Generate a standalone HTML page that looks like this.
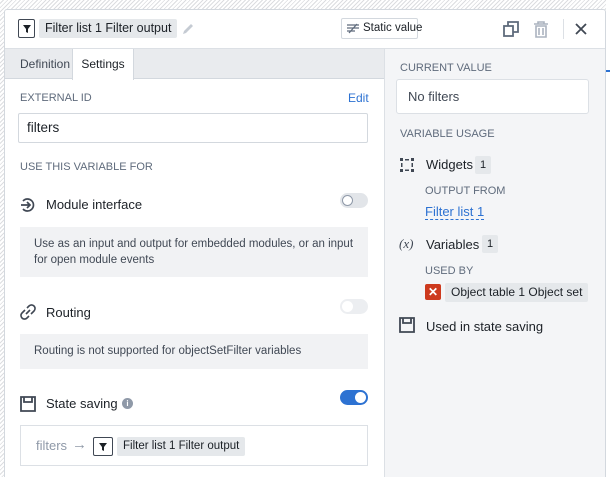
<!DOCTYPE html>
<html><head><style>
*{box-sizing:border-box;margin:0;padding:0;white-space:nowrap}
html{width:610px;height:477px;overflow:hidden}
body{width:610px;height:477px;overflow:hidden;font-family:"Liberation Sans",sans-serif;color:#1c2127;position:relative;background:repeating-linear-gradient(135deg,#fff 0 2px,#dcdde0 2px 3px)}
.a{position:absolute}
.dlg{left:4px;top:9px;width:602px;height:468px;background:#fff;border:1px solid #d3d8de;border-bottom:none;border-radius:3px 3px 0 0}
.lbl{font-size:11px;color:#5f6b7c}
.gb{background:#f1f2f4;font-size:11.5px;color:#404854;line-height:16px;padding:0 0 0 14px}
.tg{width:28px;height:15px;border-radius:8px;background:#e2e5e9}
.tg i{position:absolute;top:2px;width:11px;height:11px;border-radius:50%;background:#fff}
.chip{background:#e5e8eb;border-radius:2px;font-size:12px;padding:0 6px;line-height:19px}
.cnt{background:#e5e8eb;border-radius:2px;font-size:11px;padding:0 5px;line-height:18px}
</style></head><body>
<div class="a" style="left:606px;top:0;width:4px;height:477px;background:#fff"></div>
<div class="a" style="left:606px;top:70px;width:4px;height:2px;background:#2d72d2"></div>
<div class="a dlg"></div>
<!-- header -->
<div class="a" style="left:18px;top:19px;width:17px;height:19px;border:1.5px solid #404854;border-radius:2px"></div>
<svg class="a" style="left:22px;top:24px" width="10" height="10" viewBox="0 0 10 10"><path d="M1 1h8L6 5v4L4 8V5z" fill="#1c2127"/></svg>
<div class="a chip" style="left:39px;top:19px;font-size:12.5px">Filter list 1 Filter output</div>
<svg class="a" style="left:181px;top:22px" width="14" height="14" viewBox="0 0 14 14"><path d="M2 12l1-3 7-7 2 2-7 7z" fill="#c5cbd3"/></svg>
<div class="a" style="left:341px;top:18px;width:77px;height:21px;border:1px solid #d3d8de;border-radius:2px;font-size:11.5px;line-height:19px;padding-left:21px">Static value</div>
<svg class="a" style="left:346px;top:23px" width="14" height="11" viewBox="0 0 14 11"><path d="M1 2h12M1 5h12M1 8h8M3 10L11 1" stroke="#5f6b7c" stroke-width="1.3" fill="none"/></svg>
<svg class="a" style="left:502px;top:20px" width="18" height="18" viewBox="0 0 18 18"><rect x="2" y="6" width="9" height="10" fill="none" stroke="#5f6b7c" stroke-width="1.8"/><path d="M6 6V2h10v10h-5" fill="none" stroke="#5f6b7c" stroke-width="1.8"/></svg>
<svg class="a" style="left:532px;top:20px" width="18" height="18" viewBox="0 0 18 18"><path d="M2 4h14M6 4V2h6v2M4 6h10v11H4zM7 8v7M11 8v7" fill="none" stroke="#abb3bf" stroke-width="1.6"/></svg>
<div class="a" style="left:563px;top:19px;width:1px;height:20px;background:#dce0e5"></div>
<svg class="a" style="left:575px;top:23px" width="12" height="12" viewBox="0 0 12 12"><path d="M1 1l10 10M11 1L1 11" stroke="#404854" stroke-width="1.8"/></svg>
<div class="a" style="left:5px;top:48px;width:600px;height:1px;background:#dce0e5"></div>
<!-- tabs -->
<div class="a" style="left:5px;top:49px;width:379px;height:30px;background:#e9ebee;border-bottom:1px solid #d3d8de"></div>
<div class="a" style="left:20px;top:57px;font-size:12px;color:#404854">Definition</div>
<div class="a" style="left:72px;top:49px;width:62px;height:31px;background:#fff;border-left:1px solid #d3d8de;border-right:1px solid #d3d8de;font-size:12px;text-align:center;line-height:30px">Settings</div>
<!-- right panel -->
<div class="a" style="left:384px;top:49px;width:221px;height:428px;background:#f4f5f7;border-left:1px solid #dce0e5"></div>
<div class="a lbl" style="left:400px;top:62px">CURRENT VALUE</div>
<div class="a" style="left:396px;top:79px;width:193px;height:35px;background:#fff;border:1px solid #dce0e5;border-radius:3px;font-size:13px;line-height:33px;padding-left:11px;color:#404854">No filters</div>
<div class="a lbl" style="left:400px;top:128px">VARIABLE USAGE</div>
<svg class="a" style="left:399px;top:157px" width="16" height="16" viewBox="0 0 16 16"><g fill="#404854"><rect x="1" y="1" width="3" height="3"/><rect x="12" y="1" width="3" height="3"/><rect x="1" y="12" width="3" height="3"/><rect x="12" y="12" width="3" height="3"/><rect x="2" y="6" width="1.5" height="4"/><rect x="12.5" y="6" width="1.5" height="4"/><rect x="6" y="2" width="4" height="1.5"/><rect x="6" y="12.5" width="4" height="1.5"/></g></svg>
<div class="a" style="left:426px;top:157px;font-size:13px">Widgets</div>
<div class="a cnt" style="left:475px;top:156px">1</div>
<div class="a lbl" style="left:425px;top:185px">OUTPUT FROM</div>
<div class="a" style="left:425px;top:204px;font-size:13px;color:#2d72d2;border-bottom:1px dashed #2d72d2;line-height:15px">Filter list 1</div>
<div class="a" style="left:399px;top:236px;font-size:13px;font-style:italic;font-family:'Liberation Serif',serif;color:#404854">(x)</div>
<div class="a" style="left:426px;top:237px;font-size:13px">Variables</div>
<div class="a cnt" style="left:482px;top:235px">1</div>
<div class="a lbl" style="left:425px;top:265px">USED BY</div>
<div class="a" style="left:425px;top:284px;width:16px;height:16px;background:#cd3a1e;border-radius:2px;color:#fff;font-size:12px;text-align:center;line-height:16px;font-weight:bold">✕</div>
<div class="a chip" style="left:445px;top:283px;font-size:12px">Object table 1 Object set</div>
<svg class="a" style="left:399px;top:317px" width="16" height="16" viewBox="0 0 16 16"><path d="M1 1h14v14H1z M4 1v5h8V1" fill="none" stroke="#404854" stroke-width="1.8"/></svg>
<div class="a" style="left:426px;top:319px;font-size:13px">Used in state saving</div>
<!-- left content -->
<div class="a lbl" style="left:20px;top:92px">EXTERNAL ID</div>
<div class="a" style="left:348px;top:91px;font-size:12px;color:#2d72d2">Edit</div>
<div class="a" style="left:18px;top:113px;width:350px;height:30px;border:1px solid #d3d8de;border-radius:2px;font-size:13.5px;line-height:28px;padding-left:8px">filters</div>
<div class="a lbl" style="left:20px;top:161px">USE THIS VARIABLE FOR</div>
<svg class="a" style="left:20px;top:197px" width="16" height="16" viewBox="0 0 16 16"><path d="M3 4a6 6 0 1 1 0 8M1 8h9M7 5l3 3-3 3" fill="none" stroke="#404854" stroke-width="1.7"/></svg>
<div class="a" style="left:46px;top:197px;font-size:13px">Module interface</div>
<div class="a tg" style="left:340px;top:193px"><i style="left:2px;border:1px solid #8f99a8;top:2px"></i></div>
<div class="a gb" style="left:20px;top:227px;width:348px;height:50px;padding-top:9px;white-space:normal">Use as an input and output for embedded modules, or an input for open module events</div>
<svg class="a" style="left:20px;top:304px" width="16" height="16" viewBox="0 0 16 16"><path d="M7 4l2-2a3 3 0 0 1 5 5l-3 3M9 12l-2 2a3 3 0 0 1-5-5l3-3M6 10l4-4" fill="none" stroke="#404854" stroke-width="1.6"/></svg>
<div class="a" style="left:46px;top:305px;font-size:13px">Routing</div>
<div class="a tg" style="left:340px;top:299px;background:#eceef1"><i style="left:2px"></i></div>
<div class="a gb" style="left:20px;top:334px;width:348px;height:35px;line-height:35px">Routing is not supported for objectSetFilter variables</div>
<svg class="a" style="left:20px;top:396px" width="16" height="16" viewBox="0 0 16 16"><path d="M1 1h14v14H1z M4 1v5h8V1" fill="none" stroke="#404854" stroke-width="1.8"/></svg>
<div class="a" style="left:46px;top:396px;font-size:13px">State saving</div>
<div class="a" style="left:122px;top:398px;width:11px;height:11px;border-radius:50%;background:#8f99a8;color:#fff;font-size:8px;text-align:center;line-height:11px;font-weight:bold">i</div>
<div class="a tg" style="left:340px;top:390px;background:#2d72d2"><i style="left:15px"></i></div>
<div class="a" style="left:20px;top:425px;width:348px;height:41px;border:1px solid #dce0e5"></div>
<div class="a" style="left:36px;top:438px;font-size:13px;color:#8f99a8">filters</div>
<div class="a" style="left:72px;top:436px;font-size:15px;color:#8f99a8">→</div>
<div class="a" style="left:93px;top:437px;width:20px;height:19px;border:1.5px solid #404854;border-radius:2px"></div>
<svg class="a" style="left:98px;top:442px" width="10" height="10" viewBox="0 0 10 10"><path d="M1 1h8L6 5v4L4 8V5z" fill="#1c2127"/></svg>
<div class="a chip" style="left:117px;top:437px;font-size:11.5px">Filter list 1 Filter output</div>
</body></html>
